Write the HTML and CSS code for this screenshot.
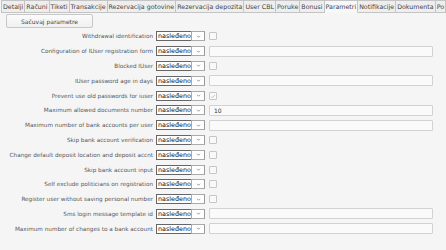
FILE: index.html
```html
<!DOCTYPE html>
<html lang="sr">
<head>
    <meta charset="UTF-8">
    <title>Parametri</title>
    <link rel="stylesheet" href="styles.css">
</head>
<body>
    <div class="tabs">
        <div class="tab">Detalji</div>
        <div class="tab">Računi</div>
        <div class="tab">Tiketi</div>
        <div class="tab">Transakcije</div>
        <div class="tab">Rezervacija gotovine</div>
        <div class="tab">Rezervacija depozita</div>
        <div class="tab">User CBL</div>
        <div class="tab">Poruke</div>
        <div class="tab">Bonusi</div>
        <div class="tab active">Parametri</div>
        <div class="tab">Notifikacije</div>
        <div class="tab">Dokumenta</div>
        <div class="tab">Po</div>
    </div>

    <div class="toolbar">
        <button class="save-btn">Sačuvaj parametre</button>
    </div>

    <div class="params">
        <div class="param-row">
            <label>Withdrawal identification</label>
            <div class="select"><span>nasleđeno</span><span class="arrow"><svg viewBox="0 0 6 4" width="5" height="3"><path d="M1 1 L3 3 L5 1" fill="none" stroke="#777" stroke-width="1"/></svg></span></div>
            <div><span class="check"></span></div>
        </div>
        <div class="param-row">
            <label>Configuration of IUser registration form</label>
            <div class="select"><span>nasleđeno</span><span class="arrow"><svg viewBox="0 0 6 4" width="5" height="3"><path d="M1 1 L3 3 L5 1" fill="none" stroke="#777" stroke-width="1"/></svg></span></div>
            <div class="text-input"></div>
        </div>
        <div class="param-row">
            <label>Blocked IUser</label>
            <div class="select"><span>nasleđeno</span><span class="arrow"><svg viewBox="0 0 6 4" width="5" height="3"><path d="M1 1 L3 3 L5 1" fill="none" stroke="#777" stroke-width="1"/></svg></span></div>
            <div><span class="check"></span></div>
        </div>
        <div class="param-row">
            <label>IUser password age in days</label>
            <div class="select"><span>nasleđeno</span><span class="arrow"><svg viewBox="0 0 6 4" width="5" height="3"><path d="M1 1 L3 3 L5 1" fill="none" stroke="#777" stroke-width="1"/></svg></span></div>
            <div class="text-input"></div>
        </div>
        <div class="param-row">
            <label>Prevent use old passwords for iuser</label>
            <div class="select"><span>nasleđeno</span><span class="arrow"><svg viewBox="0 0 6 4" width="5" height="3"><path d="M1 1 L3 3 L5 1" fill="none" stroke="#777" stroke-width="1"/></svg></span></div>
            <div><span class="check checked"><svg viewBox="0 0 8 8" width="7" height="7"><path d="M1.5 4 L3.2 5.8 L6.5 2" fill="none" stroke="#aaa" stroke-width="0.9"/></svg></span></div>
        </div>
        <div class="param-row">
            <label>Maximum allowed documents number</label>
            <div class="select"><span>nasleđeno</span><span class="arrow"><svg viewBox="0 0 6 4" width="5" height="3"><path d="M1 1 L3 3 L5 1" fill="none" stroke="#777" stroke-width="1"/></svg></span></div>
            <div class="text-input">10</div>
        </div>
        <div class="param-row">
            <label>Maximum number of bank accounts per user</label>
            <div class="select"><span>nasleđeno</span><span class="arrow"><svg viewBox="0 0 6 4" width="5" height="3"><path d="M1 1 L3 3 L5 1" fill="none" stroke="#777" stroke-width="1"/></svg></span></div>
            <div class="text-input"></div>
        </div>
        <div class="param-row">
            <label>Skip bank account verification</label>
            <div class="select"><span>nasleđeno</span><span class="arrow"><svg viewBox="0 0 6 4" width="5" height="3"><path d="M1 1 L3 3 L5 1" fill="none" stroke="#777" stroke-width="1"/></svg></span></div>
            <div><span class="check"></span></div>
        </div>
        <div class="param-row">
            <label>Change default deposit location and deposit accnt</label>
            <div class="select"><span>nasleđeno</span><span class="arrow"><svg viewBox="0 0 6 4" width="5" height="3"><path d="M1 1 L3 3 L5 1" fill="none" stroke="#777" stroke-width="1"/></svg></span></div>
            <div><span class="check"></span></div>
        </div>
        <div class="param-row">
            <label>Skip bank account input</label>
            <div class="select"><span>nasleđeno</span><span class="arrow"><svg viewBox="0 0 6 4" width="5" height="3"><path d="M1 1 L3 3 L5 1" fill="none" stroke="#777" stroke-width="1"/></svg></span></div>
            <div><span class="check"></span></div>
        </div>
        <div class="param-row">
            <label>Self exclude politicians on registration</label>
            <div class="select"><span>nasleđeno</span><span class="arrow"><svg viewBox="0 0 6 4" width="5" height="3"><path d="M1 1 L3 3 L5 1" fill="none" stroke="#777" stroke-width="1"/></svg></span></div>
            <div><span class="check"></span></div>
        </div>
        <div class="param-row">
            <label>Register user without saving personal number</label>
            <div class="select"><span>nasleđeno</span><span class="arrow"><svg viewBox="0 0 6 4" width="5" height="3"><path d="M1 1 L3 3 L5 1" fill="none" stroke="#777" stroke-width="1"/></svg></span></div>
            <div><span class="check"></span></div>
        </div>
        <div class="param-row">
            <label>Sms login message template id</label>
            <div class="select"><span>nasleđeno</span><span class="arrow"><svg viewBox="0 0 6 4" width="5" height="3"><path d="M1 1 L3 3 L5 1" fill="none" stroke="#777" stroke-width="1"/></svg></span></div>
            <div class="text-input"></div>
        </div>
        <div class="param-row">
            <label>Maximum number of changes to a bank account</label>
            <div class="select"><span>nasleđeno</span><span class="arrow"><svg viewBox="0 0 6 4" width="5" height="3"><path d="M1 1 L3 3 L5 1" fill="none" stroke="#777" stroke-width="1"/></svg></span></div>
            <div class="text-input"></div>
        </div>
    </div>
</body>
</html>
```

FILE: styles.css
```css
* {
    margin: 0;
    padding: 0;
    box-sizing: border-box;
}

body {
    background: #f5f5f5;
    font-family: 'DejaVu Sans', sans-serif;
    font-size: 6px;
    color: #333;
    width: 446px;
    height: 250px;
    overflow: hidden;
}

.tabs {
    display: flex;
    white-space: nowrap;
    padding-left: 1px;
    height: 14px;
}

.tab {
    border: 1px solid #c4c4c4;
    border-left: none;
    background: #eeeeee;
    padding: 0 1px;
    height: 13px;
    line-height: 12px;
    font-size: 6.3px;
    color: #444;
}

.tab:first-child {
    border-left: 1px solid #c4c4c4;
}

.tab.active {
    background: #f8f8f8;
    border-bottom-color: #f8f8f8;
}

.toolbar {
    padding-left: 6px;
    height: 15px;
}

.save-btn {
    width: 87px;
    height: 14px;
    border: 1px solid #c8c8c8;
    border-radius: 2px;
    background: linear-gradient(#fbfbfb, #f0f0f0);
    font-family: 'DejaVu Sans', sans-serif;
    font-size: 6px;
    color: #444;
}

.params {
    margin-top: 0;
}

.param-row {
    display: grid;
    grid-template-columns: 153px 49px 225px;
    column-gap: 3px;
    align-items: center;
    height: 14.8px;
}

.param-row label {
    text-align: right;
    color: #555;
    font-size: 5.7px;
    white-space: nowrap;
}

.param-row > div:last-child {
    margin-left: 1px;
}

.select {
    display: flex;
    height: 10px;
    border: 1px solid #666;
    background: #fff;
    color: #111;
    font-size: 6.4px;
}

.select span:first-child {
    flex: 1;
    line-height: 8px;
    padding-left: 1px;
}

.arrow {
    width: 14px;
    border: 1px solid #aaa;
    border-right-color: #999;
    margin: -1px -1px -1px 0;
    background: #fff;
    display: flex;
    align-items: center;
    justify-content: center;
}

.check {
    display: flex;
    width: 8px;
    height: 8px;
    border: 1px solid #c6c6c6;
    border-radius: 1px;
    background: #f9f9f9;
}

.text-input {
    height: 11px;
    border: 1px solid #d2d2d2;
    border-radius: 1px;
    background: #fafafa;
    line-height: 9px;
    padding-left: 4px;
    color: #333;
}
```
